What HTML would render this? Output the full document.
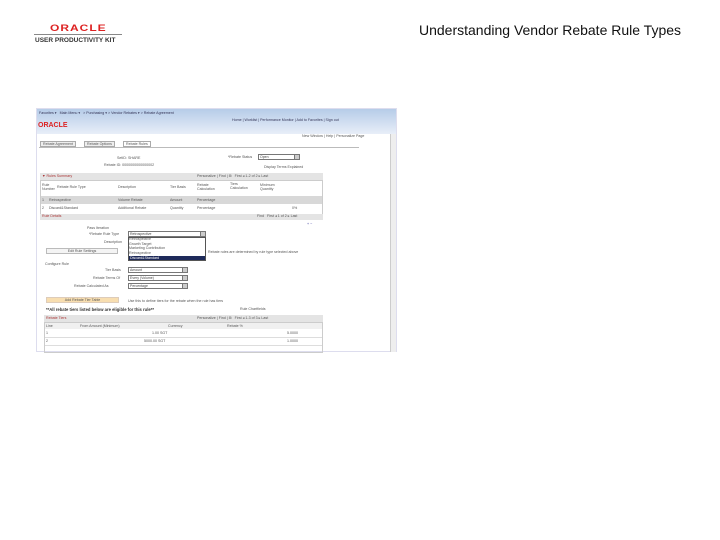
<!DOCTYPE html>
<html><head><meta charset="utf-8"><style>
*{margin:0;padding:0;box-sizing:border-box}
body{width:720px;height:540px;background:#fff;position:relative;overflow:hidden;font-family:"Liberation Sans",sans-serif}
.a{position:absolute;white-space:nowrap}
.t{font-size:3.6px;color:#555}
.sel{position:absolute;border:1px solid #777;background:#fff;font-size:3.5px;color:#444;padding-left:1px;line-height:4px}
.sel:after{content:"";position:absolute;right:0;top:0;width:4px;height:100%;background:#ccc;border-left:1px solid #777}
.g{position:absolute;background:#e4e4e4}
</style></head><body>
<div class="a" style="left:50px;top:21px;font-size:12px;font-weight:bold;color:#d22;letter-spacing:1px;transform:scaleY(.8)">ORACLE</div>
<div class="a" style="left:34px;top:34px;width:88px;height:1px;background:#888"></div>
<div class="a" style="left:35px;top:37px;font-size:6.5px;font-weight:bold;color:#333">USER PRODUCTIVITY KIT</div>
<div class="a" style="left:419px;top:22px;font-size:14px;color:#111">Understanding Vendor Rebate Rule Types</div>

<div class="a" style="left:36px;top:108px;width:361px;height:244px;background:#fff;border:1px solid #dde">
<div class="a" style="left:0;top:0;width:359px;height:25px;background:linear-gradient(#b6cce8,#e8eef8)"></div>
<div class="a t" style="left:2px;top:2px;color:#335">Favorites ▾ &nbsp; Main Menu ▾ &nbsp; &gt; Purchasing ▾ &gt; Vendor Rebates ▾ &gt; Rebate Agreement</div>
<div class="a t" style="left:195px;top:9px;color:#335">Home | Worklist | Performance Monitor | Add to Favorites | Sign out</div>
<div class="a" style="left:1px;top:13px;font-size:7px;font-weight:bold;color:#d22">ORACLE</div>
<div class="a t" style="left:265px;top:25px">New Window | Help | Personalize Page</div>
<div class="g" style="left:353px;top:25px;width:6px;height:218px;background:#eee;border-left:1px solid #ccc"></div>
<div class="a t" style="left:3px;top:32px;border:1px solid #aaa;padding:0 2px;background:#eee">Rebate Agreement</div>
<div class="a t" style="left:47px;top:32px;border:1px solid #aaa;padding:0 2px;background:#eee">Rebate Options</div>
<div class="a t" style="left:86px;top:32px;border:1px solid #aaa;padding:0 2px;background:#fff">Rebate Rules</div>
<div class="a" style="left:2px;top:38px;width:320px;height:1px;background:#bbb"></div>
<div class="a t" style="left:80px;top:47px">SetID: SHARE</div>
<div class="a t" style="left:67px;top:54px">Rebate ID: 0000000000000002</div>
<div class="a t" style="left:191px;top:46px">*Rebate Status</div>
<div class="sel" style="left:221px;top:45px;width:42px;height:6px">Open</div>
<div class="a t" style="left:227px;top:56px">Display Terms Explained</div>
<div class="g" style="left:3px;top:64px;width:283px;height:7px"></div>
<div class="a t" style="left:5px;top:65px;color:#a33">▼ Rules Summary</div>
<div class="a t" style="left:160px;top:65px">Personalize | Find | ⊞ &nbsp; First ◂ 1-2 of 2 ▸ Last</div>
<div class="a" style="left:3px;top:71px;width:283px;height:40px;border:1px solid #ccc"></div>
<div class="a t" style="left:5px;top:74px">Rule<br>Number</div>
<div class="a t" style="left:20px;top:76px">Rebate Rule Type</div>
<div class="a t" style="left:81px;top:76px">Description</div>
<div class="a t" style="left:133px;top:76px">Tier Basis</div>
<div class="a t" style="left:160px;top:74px">Rebate<br>Calculation</div>
<div class="a t" style="left:193px;top:73px">Tiers<br>Calculation</div>
<div class="a t" style="left:223px;top:74px">Minimum<br>Quantity</div>
<div class="g" style="left:4px;top:87px;width:281px;height:8px;background:#d8d8d8"></div>
<div class="a t" style="left:5px;top:89px">1 &nbsp;&nbsp;&nbsp;&nbsp;Retrospective</div>
<div class="a t" style="left:81px;top:89px">Volume Rebate</div>
<div class="a t" style="left:133px;top:89px">Amount</div>
<div class="a t" style="left:160px;top:89px">Percentage</div>
<div class="a t" style="left:5px;top:97px">2 &nbsp;&nbsp;&nbsp;&nbsp;Discard&amp;Standard</div>
<div class="a t" style="left:81px;top:97px">Additional Rebate</div>
<div class="a t" style="left:133px;top:97px">Quantity</div>
<div class="a t" style="left:160px;top:97px">Percentage</div>
<div class="a t" style="left:255px;top:97px">0%</div>
<div class="g" style="left:3px;top:105px;width:283px;height:6px"></div>
<div class="a t" style="left:5px;top:105px;color:#a33">Rule Details</div>
<div class="a t" style="left:220px;top:105px">Find &nbsp; First ◂ 1 of 2 ▸ Last</div>
<div class="a t" style="left:270px;top:113px;color:#339">+ −</div>
<div class="a t" style="left:50px;top:117px">Pass Iteration</div>
<div class="a t" style="left:52px;top:123px">*Rebate Rule Type</div>
<div class="sel" style="left:91px;top:122px;width:78px;height:6px">Retrospective</div>
<div class="a t" style="left:67px;top:131px">Description</div>
<div class="a" style="left:91px;top:128px;width:78px;height:24px;border:1px solid #555;background:#fff"></div>
<div class="a t" style="left:92px;top:128px;line-height:4.5px">Retrospective<br>Growth Target<br>Marketing Contribution<br>Retrospective</div>
<div class="a" style="left:92px;top:147px;width:76px;height:4px;background:#1e2a5a"></div>
<div class="a t" style="left:93px;top:147px;color:#fff">Discard&amp;Standard</div>
<div class="a t" style="left:9px;top:139px;width:72px;height:6px;border:1px solid #bbb;background:#f4f4f4;text-align:center">Edit Rule Settings</div>
<div class="a t" style="left:171px;top:141px">Rebate rules are determined by rule type selected above</div>
<div class="a t" style="left:8px;top:153px">Configure Rule</div>
<div class="a t" style="left:68px;top:159px">Tier Basis</div>
<div class="sel" style="left:91px;top:158px;width:60px;height:6px">Amount</div>
<div class="a t" style="left:56px;top:167px">Rebate Terms Of</div>
<div class="sel" style="left:91px;top:166px;width:60px;height:6px">Every (Volume)</div>
<div class="a t" style="left:37px;top:175px">Rebate Calculated As</div>
<div class="sel" style="left:91px;top:174px;width:60px;height:6px">Percentage</div>
<div class="a t" style="left:9px;top:188px;width:73px;height:6px;border:1px solid #dcb;background:#f8deb0;text-align:center">Add Rebate Tier Table</div>
<div class="a t" style="left:91px;top:190px">Use this to define tiers for the rebate when the rule has tiers</div>
<div class="a" style="left:9px;top:198px;font-size:4.2px;font-weight:bold;color:#333">**All rebate tiers listed below are eligible for this rule**</div>
<div class="a t" style="left:203px;top:198px">Rule Chartfields</div>
<div class="g" style="left:7px;top:206px;width:279px;height:7px"></div>
<div class="a t" style="left:9px;top:207px;color:#a33">Rebate Tiers</div>
<div class="a t" style="left:160px;top:207px">Personalize | Find | ⊞ &nbsp; First ◂ 1-3 of 3 ▸ Last</div>
<div class="a" style="left:7px;top:213px;width:279px;height:31px;border:1px solid #ccc"></div>
<div class="g" style="left:8px;top:214px;width:277px;height:6px;background:#f0f0f0"></div>
<div class="a t" style="left:9px;top:215px">Line</div>
<div class="a t" style="left:43px;top:215px">From Amount (Minimum)</div>
<div class="a t" style="left:131px;top:215px">Currency</div>
<div class="a t" style="left:190px;top:215px">Rebate %</div>
<div class="a" style="left:8px;top:228px;width:277px;height:1px;background:#ddd"></div>
<div class="a t" style="left:9px;top:222px">1</div><div class="a t" style="left:115px;top:222px">1.00 SGT</div><div class="a t" style="left:250px;top:222px">5.0000</div>
<div class="a t" style="left:9px;top:230px">2</div><div class="a t" style="left:107px;top:230px">5000.00 SGT</div><div class="a t" style="left:250px;top:230px">1.0000</div>
<div class="a" style="left:8px;top:236px;width:277px;height:1px;background:#ddd"></div>
</div>
</body></html>
